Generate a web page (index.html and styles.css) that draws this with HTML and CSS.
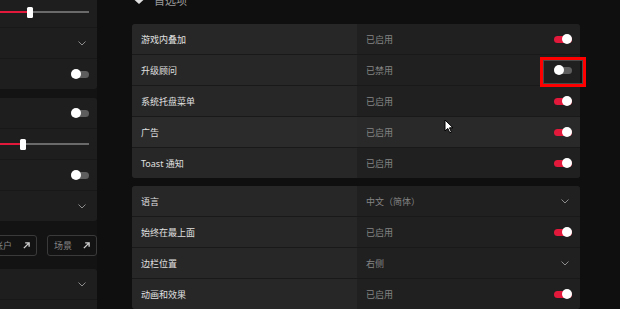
FILE: index.html
```html
<!DOCTYPE html>
<html lang="zh-CN">
<head>
    <meta charset="UTF-8">
    <meta name="viewport" content="width=device-width, initial-scale=1.0">
    <title>首选项</title>
    <link rel="stylesheet" href="styles.css">
</head>
<body>
    <div class="app">
        <aside class="sidebar">
            <div class="panel panel-first">
                <div class="srow">
                    <div class="slider">
                        <span class="slider-fill"></span>
                        <span class="slider-thumb"></span>
                        <span class="slider-rest rest-a"></span>
                    </div>
                </div>
                <div class="srow">
                    <svg class="chevron side-chevron" viewBox="0 0 8 5" width="8" height="5"><path d="M0.5 0.5 L4 4 L7.5 0.5" /></svg>
                </div>
                <div class="srow"><span class="toggle off"></span></div>
            </div>

            <div class="panel">
                <div class="srow"><span class="toggle off"></span></div>
                <div class="srow">
                    <div class="slider">
                        <span class="slider-fill"></span>
                        <span class="slider-thumb"></span>
                        <span class="slider-rest rest-b"></span>
                    </div>
                </div>
                <div class="srow"><span class="toggle off"></span></div>
                <div class="srow">
                    <svg class="chevron side-chevron" viewBox="0 0 8 5" width="8" height="5"><path d="M0.5 0.5 L4 4 L7.5 0.5" /></svg>
                </div>
            </div>

            <div class="links">
                <a class="link-btn" href="#">账户
                    <svg class="ext" viewBox="0 0 8 8" width="7" height="7"><path d="M1 7 L7 1 M2.5 1 H7 V5.5" /></svg>
                </a>
                <a class="link-btn" href="#">场景
                    <svg class="ext" viewBox="0 0 8 8" width="7" height="7"><path d="M1 7 L7 1 M2.5 1 H7 V5.5" /></svg>
                </a>
            </div>

            <div class="panel">
                <div class="srow">
                    <svg class="chevron side-chevron" viewBox="0 0 8 5" width="8" height="5"><path d="M0.5 0.5 L4 4 L7.5 0.5" /></svg>
                </div>
                <div class="srow"></div>
            </div>
        </aside>

        <main class="main">
            <h2 class="section-title">
                <svg class="section-icon" viewBox="0 0 10 8" width="10" height="8"><path d="M0 0 H10 V2.5 L5 7 L0 2.5 Z" /></svg>
                首选项
            </h2>

            <div class="card">
                <div class="row">
                    <div class="label">游戏内叠加</div>
                    <div class="value">已启用<span class="toggle"></span></div>
                </div>
                <div class="row">
                    <div class="label">升级顾问</div>
                    <div class="value">已禁用<span class="toggle off"></span></div>
                </div>
                <div class="row">
                    <div class="label">系统托盘菜单</div>
                    <div class="value">已启用<span class="toggle"></span></div>
                </div>
                <div class="row hover">
                    <div class="label">广告</div>
                    <div class="value">已启用<span class="toggle"></span></div>
                </div>
                <div class="row">
                    <div class="label">Toast 通知</div>
                    <div class="value">已启用<span class="toggle"></span></div>
                </div>
            </div>

            <div class="card">
                <div class="row">
                    <div class="label">语言</div>
                    <div class="value">中文（简体）
                        <svg class="chevron" viewBox="0 0 8 5" width="8" height="5"><path d="M0.5 0.5 L4 4 L7.5 0.5" /></svg>
                    </div>
                </div>
                <div class="row">
                    <div class="label">始终在最上面</div>
                    <div class="value">已启用<span class="toggle"></span></div>
                </div>
                <div class="row">
                    <div class="label">边栏位置</div>
                    <div class="value">右侧
                        <svg class="chevron" viewBox="0 0 8 5" width="8" height="5"><path d="M0.5 0.5 L4 4 L7.5 0.5" /></svg>
                    </div>
                </div>
                <div class="row">
                    <div class="label">动画和效果</div>
                    <div class="value">已启用<span class="toggle"></span></div>
                </div>
            </div>
        </main>
    </div>

    <!-- annotation + mouse pointer drawn over the page -->
    <div class="highlight"></div>
    <svg class="cursor" viewBox="0 0 10 15" width="10" height="15"><path d="M1 1 L1 12 L3.8 9.4 L5.8 13.8 L7.4 13.1 L5.5 8.8 L9 8.8 Z" /></svg>
</body>
</html>
```

FILE: styles.css
```css
body {
    margin: 0;
    height: 309px;
    overflow: hidden;
    position: relative;
    background-color: #0f0f0f;
    font-family: 'Noto Sans', 'Noto Sans CJK SC', sans-serif;
    font-size: 9px;
    color: #e0e0e0;
}
.app {
    display: flex;
    height: 100%;
}

/* left column, mostly scrolled out of view */
.sidebar {
    flex-shrink: 0;
    width: 300px;
    margin-left: -203px;
    background-color: #131313;
}
.panel {
    display: flex;
    flex-direction: column;
    gap: 1px;
    background-color: #181818;
    border-radius: 3px;
    overflow: hidden;
}
.panel-first {
    margin-top: -3px;
    margin-bottom: 9px;
}
.srow {
    height: 30px;
    display: flex;
    align-items: center;
    justify-content: flex-end;
    padding-right: 8px;
    background-color: #1e1e1e;
}
.side-chevron {
    margin-right: 3px;
}
.slider {
    flex: 1;
    display: flex;
    align-items: center;
    height: 12px;
}
.slider-fill {
    flex: 1;
    height: 2px;
    background-color: #e3193b;
}
.slider-thumb {
    width: 6px;
    height: 11px;
    border-radius: 1.5px;
    background-color: #fff;
}
.slider-rest {
    height: 2px;
    background-color: #6a6a6a;
}
.rest-a {
    width: 56px;
}
.rest-b {
    width: 63px;
}
.links {
    display: flex;
    justify-content: flex-end;
    gap: 10px;
    margin: 14px 0 13px;
}
.link-btn {
    width: 50px;
    height: 21px;
    box-sizing: border-box;
    display: flex;
    align-items: center;
    justify-content: space-between;
    padding: 0 6px 0 6px;
    border: 1px solid #3a3a3a;
    border-radius: 3px;
    color: #858585;
    text-decoration: none;
}
.ext {
    fill: none;
    stroke: #cfcfcf;
    stroke-width: 1.6;
}

/* main settings list */
.main {
    width: 448px;
    margin-left: 35px;
}
.section-title {
    display: flex;
    align-items: center;
    gap: 10px;
    margin: -7px 0 17px 2px;
    height: 14px;
    font-size: 11px;
    font-weight: 400;
    color: #9a9a9a;
}
.section-icon {
    fill: #dedede;
    margin-top: 2px;
}
.card {
    display: flex;
    flex-direction: column;
    gap: 1px;
    background-color: #191919;
    border-radius: 3px;
    overflow: hidden;
    margin-bottom: 8px;
}
.row {
    display: grid;
    grid-template-columns: 225px 1fr;
    height: 30px;
}
.label,
.value {
    display: flex;
    align-items: center;
}
.label {
    padding-left: 9px;
    background-color: #272727;
}
.value {
    justify-content: space-between;
    padding: 0 8px 0 9px;
    background-color: #202020;
    color: #858585;
}
.row.hover .label {
    background-color: #2b2b2b;
}
.row.hover .value {
    background-color: #292929;
}
.chevron {
    fill: none;
    stroke: #8c8c8c;
    stroke-width: 1;
    margin-right: 3px;
}

.toggle {
    position: relative;
    width: 18px;
    height: 7px;
    border-radius: 4px;
    background-color: #e3193b;
}
.toggle::after {
    content: '';
    position: absolute;
    top: -1.5px;
    right: 0;
    width: 10px;
    height: 10px;
    border-radius: 50%;
    background-color: #fff;
}
.toggle.off {
    background-color: #5e5e5e;
}
.toggle.off::after {
    right: auto;
    left: 0;
}

.highlight {
    position: absolute;
    left: 540px;
    top: 57px;
    width: 46px;
    height: 30px;
    box-sizing: border-box;
    border: 3px solid #ff0000;
    box-shadow: inset 0 0 0 1px #4a4a4a;
}
.cursor {
    position: absolute;
    left: 444px;
    top: 119px;
    fill: #fff;
    stroke: #000;
    stroke-width: 1;
}
```
